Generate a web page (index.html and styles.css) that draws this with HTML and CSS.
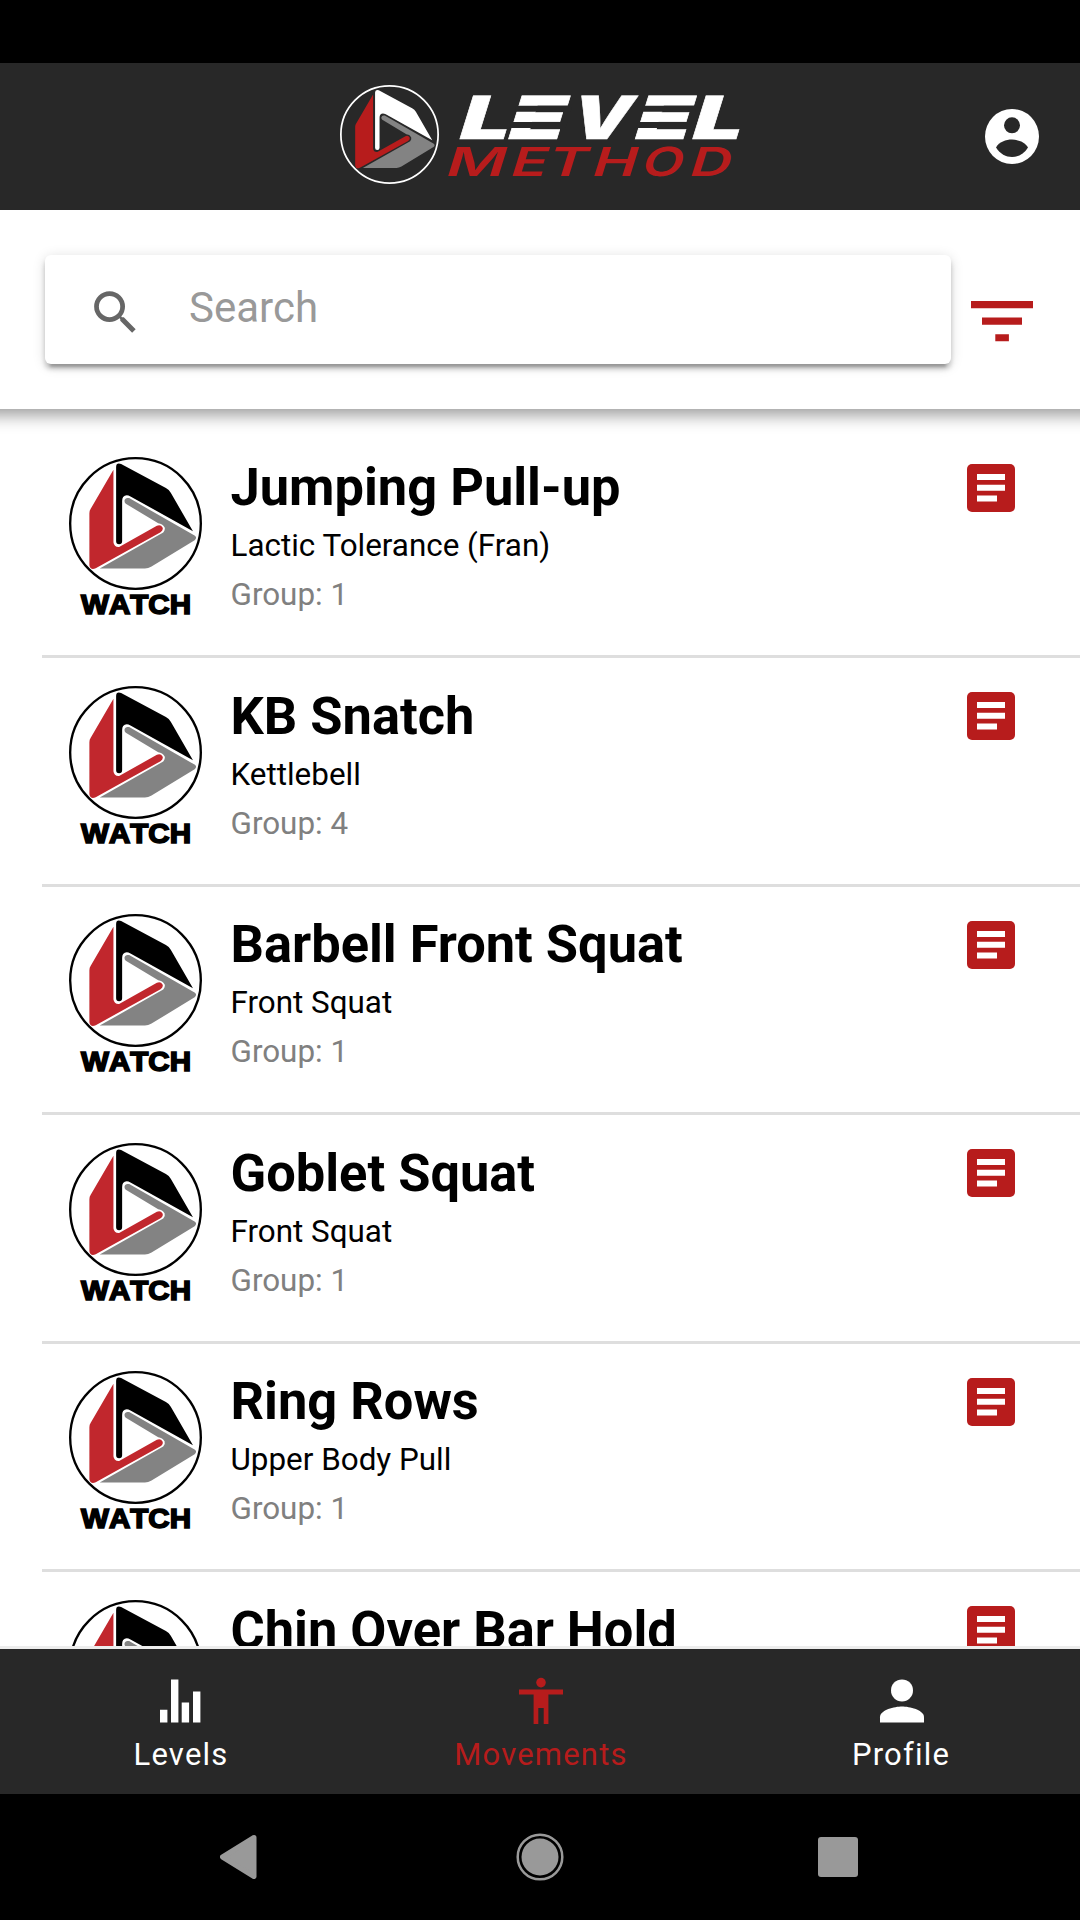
FILE: index.html
```
<!DOCTYPE html>
<html lang="en">
<head>
  <meta charset="UTF-8">
  <meta name="viewport" content="width=device-width, initial-scale=1.0"/>
  <title>Level Method</title>
  <link rel="stylesheet" href="styles.css">
</head>
<body>
  <!-- Shared shapes -->
  <svg class="sprite" aria-hidden="true">
    <symbol id="mark" viewBox="88 50 398 398">
      <circle class="mark-ring" cx="287" cy="249" r="195.5"/>
      <path class="mark-top" d="M229 80Q229 66 244 71L378 143Q388 148 393 158L459 272 272 168Q258 160 250 170 247 175 247 182V302Q247 311 238 311 229 311 229 302Z"/>
      <path class="mark-right" d="M254 181Q256 170 268 173L465 286Q472 292 464 299L335 378Q325 384 315 384H180L370 276Q377 268 374 260 368 249 355 248L258 190Q254 187 254 181Z"/>
      <path class="mark-left" d="M221 88V305Q223 320 238 319L351 256Q362 251 368 261 371 269 362 275L168 383Q152 390 149 374V218Q149 210 153 205Z"/>
    </symbol>
    <symbol id="note" viewBox="0 0 48 48">
      <rect width="48" height="48" rx="5" fill="#b71c1c"/>
      <path d="M10 10h28v6H10zM10 20.7h28v6H10zM10 31.5h20v6H10z" fill="#fff"/>
    </symbol>
  </svg>

  <div class="status-bar"></div>

  <header class="app-header">
    <div class="brand">
      <svg class="brand-mark"><use href="#mark"/></svg>
      <svg class="brand-name" width="310" height="100" viewBox="445 85 310 100">
        <g transform="translate(0 139) skewX(-17.3)">
          <text class="brand-level" y="-0.3"><tspan x="455.6" textLength="50" lengthAdjust="spacingAndGlyphs">L</tspan><tspan x="504.2" textLength="56.5" lengthAdjust="spacingAndGlyphs">E</tspan><tspan x="566.5" textLength="60" lengthAdjust="spacingAndGlyphs">V</tspan><tspan x="630.9" textLength="56" lengthAdjust="spacingAndGlyphs">E</tspan><tspan x="688.4" textLength="50" lengthAdjust="spacingAndGlyphs">L</tspan></text>
          <path class="brand-cuts" d="M506 -30.200h56M506 -14.100h56M632.500 -30.200h54M632.500 -14.100h54"/>
        </g>
        <g transform="translate(0 175.5) skewX(-17.3)">
          <text class="brand-method" y="0"><tspan x="443.6" textLength="59.8" lengthAdjust="spacingAndGlyphs">M</tspan><tspan x="508.2" textLength="36.5" lengthAdjust="spacingAndGlyphs">E</tspan><tspan x="545" textLength="40" lengthAdjust="spacingAndGlyphs">T</tspan><tspan x="590" textLength="44.5" lengthAdjust="spacingAndGlyphs">H</tspan><tspan x="639.2" textLength="41" lengthAdjust="spacingAndGlyphs">O</tspan><tspan x="687.3" textLength="41" lengthAdjust="spacingAndGlyphs">D</tspan></text>
        </g>
      </svg>
    </div>
    <svg class="account" width="54" height="55" viewBox="0 0 54 55">
      <ellipse cx="27" cy="27.5" rx="27" ry="27.5" fill="#fff"/>
      <circle cx="27" cy="16.3" r="8" fill="#282828"/>
      <path d="M11 38.5C14 33 21 30.6 27 30.6S40 33 43 38.5C39 45 33 48 27 48S15 45 11 38.5Z" fill="#282828"/>
    </svg>
  </header>

  <div class="search-bar">
    <div class="search-box">
      <svg class="search-icon" viewBox="0 0 24 24"><path d="M15.5 14h-.79l-.28-.27A6.47 6.47 0 0 0 16 9.5 6.5 6.5 0 1 0 9.5 16c1.61 0 3.09-.59 4.23-1.57l.27.28v.79l5 4.99L20.49 19l-4.99-5zm-6 0a4.5 4.5 0 1 1 0-9 4.5 4.5 0 0 1 0 9z"/></svg>
      <span class="placeholder">Search</span>
    </div>
    <svg class="filter" width="62" height="41" viewBox="0 0 62 41">
      <path d="M0 0h62v7.3H0zM11 16.5h40v7.3H11zM24.3 33.3h13.6v7H24.3z"/>
    </svg>
  </div>

  <main class="list" id="list"></main>

  <nav class="tabs">
    <div class="tab">
      <svg class="tab-icon" viewBox="0 0 48 48"><path d="M4 32.8h7.4V45.5H4zM15 2.5h7.4v43H15zM25.7 25.5h7.4v20h-7.4zM37 14.5h7.4v31H37z"/></svg>
      <span>Levels</span>
    </div>
    <div class="tab active">
      <svg class="tab-icon" viewBox="0 0 48 48"><circle cx="25" cy="5.6" r="4.8"/><path d="M3 12.5h44v5H32.4V47h-4.7V31h-5.4v16h-4.7V17.5H3z"/></svg>
      <span>Movements</span>
    </div>
    <div class="tab">
      <svg class="tab-icon" viewBox="0 0 48 48"><circle cx="26" cy="13.4" r="11"/><path d="M4 45.5v-5.3C4 32.8 18.7 29.5 26 29.5s22 3.3 22 10.7v5.3z"/></svg>
      <span>Profile</span>
    </div>
  </nav>

  <div class="system-nav">
    <svg width="38" height="44" viewBox="0 0 38 44"><path d="M34 2.5 2.5 22 34 41.5Z" stroke="#999" stroke-width="5" stroke-linejoin="round"/></svg>
    <svg class="home" width="48" height="48" viewBox="0 0 48 48"><circle cx="24" cy="24" r="18.5"/><circle cx="24" cy="24" r="22.3" fill="none" stroke="#999" stroke-width="2.5"/></svg>
    <svg width="40" height="40" viewBox="0 0 40 40"><rect width="40" height="40" rx="3"/></svg>
  </div>

  <script>
    const movements = [
      { name: "Jumping Pull-up", category: "Lactic Tolerance (Fran)", group: 1 },
      { name: "KB Snatch", category: "Kettlebell", group: 4 },
      { name: "Barbell Front Squat", category: "Front Squat", group: 1 },
      { name: "Goblet Squat", category: "Front Squat", group: 1 },
      { name: "Ring Rows", category: "Upper Body Pull", group: 1 },
      { name: "Chin Over Bar Hold" }
    ];

    document.getElementById('list').innerHTML = movements.map(m => `
      <article class="movement">
        <div class="watch">
          <svg class="watch-mark"><use href="#mark"/></svg>
          ${m.category ? '<svg class="watch-label" width="114" height="26"><text x="2" y="22" textLength="110" lengthAdjust="spacingAndGlyphs">WATCH</text></svg>' : ''}
        </div>
        <div class="info">
          <h2>${m.name}</h2>
          ${m.category ? `<p>${m.category}</p><p class="group">Group: ${m.group}</p>` : ''}
        </div>
        <svg class="note"><use href="#note"/></svg>
      </article>`).join('');
  </script>
</body>
</html>
```
FILE: styles.css
```
* {
  box-sizing: border-box;
}

body {
  margin: 0;
  height: 1920px;
  display: flex;
  flex-direction: column;
  overflow: hidden;
  font-family: Roboto, sans-serif;
  background-color: #fff;
  color: #000;
}

svg {
  display: block;
  flex-shrink: 0;
}

.sprite {
  position: absolute;
  width: 0;
  height: 0;
}

.status-bar {
  flex: 0 0 63px;
  background-color: #000;
}

/* header */
.app-header {
  flex: 0 0 147px;
  display: flex;
  align-items: flex-start;
  justify-content: space-between;
  padding: 0 41px 0 340px;
  background-color: #282828;
}

.brand {
  display: flex;
  padding-top: 22px;
}

.brand-mark {
  width: 99px;
  height: 99px;
  --ring: #fff;
  --top: #fff;
  --left: #b71c1c;
}

.brand-name {
  margin-left: 6px;
  overflow: visible;
}

.mark-ring {
  fill: none;
  stroke: var(--ring);
  stroke-width: 7;
}

.mark-top {
  fill: var(--top);
}

.mark-right {
  fill: #838383;
}

.mark-left {
  fill: var(--left);
}

.brand-level {
  font: 900 59.5px Inter, sans-serif;
  fill: #fff;
  stroke: #fff;
  stroke-width: 0.5px;
}

.brand-method {
  font: 600 40px Inter, sans-serif;
  fill: #b71c1c;
}

.brand-cuts {
  stroke: #282828;
  stroke-width: 6;
}

.account {
  margin-top: 46px;
}

/* search */
.search-bar {
  flex: 0 0 199px;
  display: flex;
  align-items: flex-start;
  padding: 45px 0 0 45px;
  background-color: #fff;
  box-shadow: 0 -14px 16px 20px rgba(0, 0, 0, 0.4);
  clip-path: inset(0 0 -40px 0);
  z-index: 1;
}

.search-box {
  width: 906px;
  height: 109px;
  display: flex;
  align-items: center;
  padding-left: 42px;
  border-radius: 6px;
  box-shadow: 0 8px 3px -5px rgba(0, 0, 0, 0.2), 0 5px 5px rgba(0, 0, 0, 0.2), 0 2px 13px rgba(0, 0, 0, 0.14);
}

.search-icon {
  width: 57px;
  height: 57px;
  margin-top: 5px;
  fill: #666;
}

.placeholder {
  margin: -4px 0 0 45px;
  font-size: 42px;
  color: #999;
}

.filter {
  margin: 46px 0 0 20px;
  fill: #b71c1c;
}

/* movement list */
.list {
  flex: 0 0 1237px;
  padding: 20.5px 0 0 42px;
  overflow: hidden;
}

.movement {
  height: 228.5px;
  display: flex;
  align-items: flex-start;
  padding: 27.5px 65.5px 0 27px;
  border-bottom: 3px solid #dedede;
}

.watch {
  width: 133px;
  display: flex;
  flex-direction: column;
  align-items: center;
}

.watch-mark {
  width: 133px;
  height: 133px;
  --ring: #000;
  --top: #000;
  --left: #c1272d;
}

.watch-label {
  margin-top: 2px;
  overflow: visible;
}

.watch-label text {
  font: bold 27px "Liberation Sans", Arial, sans-serif;
  font-kerning: none;
  stroke: #000;
  stroke-width: 1.6px;
}

.info {
  flex: 1;
  margin-left: 28.5px;
}

.info h2 {
  margin: 0;
  font-size: 52.4px;
  line-height: 60px;
  font-weight: 700;
}

.info p {
  margin: 4px 0 0;
  font-size: 31.4px;
  line-height: 45px;
}

.info h2 + p {
  margin-top: 6px;
}

.info .group {
  color: #808080;
}

.note {
  width: 48px;
  height: 48px;
  margin-top: 6.5px;
}

/* bottom tabs */
.tabs {
  flex: 0 0 148px;
  display: flex;
  border-top: 3px solid #ededed;
  background-color: #282828;
}

.tab {
  flex: 1;
  display: flex;
  flex-direction: column;
  align-items: center;
  padding-top: 28px;
  color: #fff;
  fill: #fff;
  font-size: 31px;
  line-height: 36px;
  letter-spacing: 1.2px;
}

.tab span {
  padding-left: 2px;
}

.tab.active {
  color: #b71c1c;
  fill: #b71c1c;
}

.tab-icon {
  width: 48px;
  height: 48px;
  margin-bottom: 12px;
}

/* android buttons */
.system-nav {
  flex: 1;
  display: flex;
  align-items: center;
  justify-content: space-between;
  padding: 0 222px 0 220px;
  background-color: #000;
  fill: #999;
}

.home {
  margin-left: 3px;
}
```
